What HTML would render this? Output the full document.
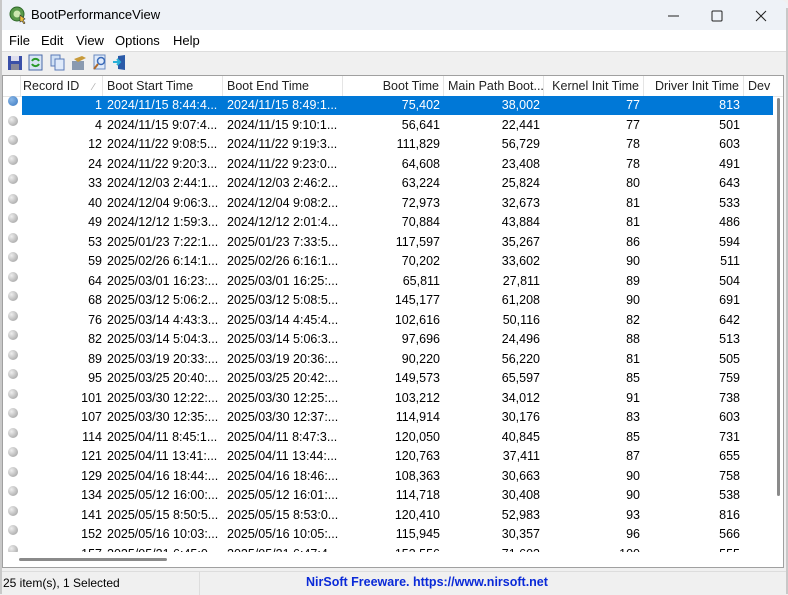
<!DOCTYPE html>
<html><head><meta charset="utf-8">
<style>
*{margin:0;padding:0;box-sizing:border-box}
body{width:788px;height:594px;overflow:hidden;background:#f0f0f0;font-family:"Liberation Sans",sans-serif;font-size:12.5px;color:#000;position:relative}
.title{position:absolute;left:0;top:0;width:788px;height:30px;background:#eef2f7;border-top-right-radius:8px}
.title .t{position:absolute;left:31px;top:7px;font-size:13px}
.menu{position:absolute;left:0;top:30px;width:788px;height:21px;background:#fff}
.menu span{position:absolute;top:3px;font-size:13px}
.tb{position:absolute;left:0;top:51px;width:788px;height:23px;background:#f0f0f0;border-top:1px solid #ddd}
.list{position:absolute;left:2px;top:75px;width:782px;height:493px;background:#fff;border:1px solid #a0a0a0;overflow:hidden}
.hdr{position:absolute;top:0;height:21px;left:0;width:800px;border-bottom:1px solid #e5e5e5}
.hdr div{position:absolute;top:0;height:21px;line-height:21px;border-right:1px solid #e5e5e5;padding:0 4px;white-space:nowrap;overflow:hidden;color:#222}
.row{position:absolute;left:0;width:770px;height:19px;line-height:19px}
.row div{position:absolute;top:0;white-space:nowrap;overflow:hidden}
.row .r{text-align:right}
.dot{position:absolute;left:5px;top:4px;width:10px;height:10px;border-radius:50%;background:radial-gradient(circle at 35% 35%,#eee,#999)}
.sel .bg{position:absolute;left:19px;top:0;width:751px;height:19px;background:#0078d7}
.sel{color:#fff}
.sel .dot{background:radial-gradient(circle at 35% 35%,#8ab8e8,#3a78c0)}
.vs{position:absolute;left:774px;top:22px;width:3px;height:398px;background:#8a8a8a;border-radius:2px}
.hs{position:absolute;left:16px;top:482px;width:148px;height:3px;background:#8a8a8a;border-radius:2px}
.status{position:absolute;left:0;top:571px;width:788px;height:23px;background:#f0f0f0;border-top:1px solid #ddd}
</style></head><body>
<div class="title">
<svg style="position:absolute;left:9px;top:6px" width="18" height="18"><circle cx="8" cy="8" r="7" fill="#5a9a4a" stroke="#2f6a2a"/><circle cx="8" cy="8" r="3.5" fill="#cde8b0"/><path d="M11 9 l5 4 -2 1 2 3 -1 1 -2 -3 -2 1z" fill="#f2c23a" stroke="#333" stroke-width=".6"/></svg>
<span class="t">BootPerformanceView</span>
<svg style="position:absolute;left:660px;top:9px" width="120" height="14"><line x1="8" y1="7" x2="19" y2="7" stroke="#222"/><rect x="52" y="2" width="10" height="10" fill="none" stroke="#222" rx="1"/><path d="M96 2 l10 10 M106 2 l-10 10" stroke="#222"/></svg>
</div>
<div class="menu"><span style="left:9px">File</span><span style="left:41px">Edit</span><span style="left:76px">View</span><span style="left:115px">Options</span><span style="left:173px">Help</span></div>
<div class="tb">
<svg width="140" height="22" style="position:absolute;left:0;top:0">
<rect x="8" y="4" width="14" height="14" fill="#3a4fa8"/><rect x="11" y="4" width="8" height="5" fill="#dde"/><rect x="11" y="12" width="8" height="6" fill="#889"/>
<rect x="29" y="3" width="13" height="15" fill="#d8e4f4" stroke="#4a6aa8"/><path d="M32 9 a4 4 0 0 1 7 0 M39 12 a4 4 0 0 1 -7 0" stroke="#2a9a2a" stroke-width="2" fill="none"/>
<rect x="51" y="3" width="9" height="11" fill="#cfe0f5" stroke="#5a7ab8"/><rect x="55" y="7" width="9" height="11" fill="#dfeafa" stroke="#5a7ab8"/>
<rect x="72" y="9" width="12" height="9" fill="#8a9ab0"/><path d="M74 7 l8 -3 4 2 -8 4z" fill="#c89a3a"/>
<rect x="94" y="3" width="11" height="14" fill="#dfeafa" stroke="#6a8ac0"/><circle cx="101" cy="9" r="3.5" fill="none" stroke="#3a6ab8" stroke-width="1.5"/><line x1="98" y1="12" x2="94" y2="17" stroke="#b06a2a" stroke-width="2"/>
<path d="M118 4 l7 -1 0 15 -7 -1z" fill="#2a5aa8"/><path d="M113 10 h7 M117 7 l3 3 -3 3" stroke="#2ab0d8" stroke-width="2" fill="none"/>
</svg>
</div>
<div class="list">
<div class="hdr">
<div style="left:0;width:18px"></div>
<div style="left:18px;width:82px;padding-left:2px">Record ID <span style="color:#aaa;font-size:10px;margin-left:10px">∕</span></div>
<div style="left:100px;width:120px">Boot Start Time</div>
<div style="left:220px;width:120px">Boot End Time</div>
<div style="left:340px;width:101px;text-align:right">Boot Time</div>
<div style="left:441px;width:100px;text-align:right">Main Path Boot...</div>
<div style="left:541px;width:100px;text-align:right">Kernel Init Time</div>
<div style="left:641px;width:100px;text-align:right">Driver Init Time</div>
<div style="left:741px;width:60px">Dev</div>
</div>
<div id="rows"></div>
<div class="vs"></div>
<div class="hs"></div>
</div>
<div class="status">
<span style="position:absolute;left:3px;top:4px;font-size:12px">25 item(s), 1 Selected</span>
<div style="position:absolute;left:199px;top:0;width:1px;height:23px;background:#ddd"></div>
<span style="position:absolute;left:306px;top:3px;font-size:12.5px;font-weight:bold;color:#0a2ad8">NirSoft Freeware. https://www.nirsoft.net</span>
</div>
<div style="position:absolute;left:0;top:0;width:2px;height:594px;background:#c8c8c8"></div>
<div style="position:absolute;right:0;top:8px;width:2px;height:586px;background:#c8c8c8"></div>
<script>
var d=[[1,"2024/11/15 8:44:4...","2024/11/15 8:49:1...","75,402","38,002",77,813],
[4,"2024/11/15 9:07:4...","2024/11/15 9:10:1...","56,641","22,441",77,501],
[12,"2024/11/22 9:08:5...","2024/11/22 9:19:3...","111,829","56,729",78,603],
[24,"2024/11/22 9:20:3...","2024/11/22 9:23:0...","64,608","23,408",78,491],
[33,"2024/12/03 2:44:1...","2024/12/03 2:46:2...","63,224","25,824",80,643],
[40,"2024/12/04 9:06:3...","2024/12/04 9:08:2...","72,973","32,673",81,533],
[49,"2024/12/12 1:59:3...","2024/12/12 2:01:4...","70,884","43,884",81,486],
[53,"2025/01/23 7:22:1...","2025/01/23 7:33:5...","117,597","35,267",86,594],
[59,"2025/02/26 6:14:1...","2025/02/26 6:16:1...","70,202","33,602",90,511],
[64,"2025/03/01 16:23:...","2025/03/01 16:25:...","65,811","27,811",89,504],
[68,"2025/03/12 5:06:2...","2025/03/12 5:08:5...","145,177","61,208",90,691],
[76,"2025/03/14 4:43:3...","2025/03/14 4:45:4...","102,616","50,116",82,642],
[82,"2025/03/14 5:04:3...","2025/03/14 5:06:3...","97,696","24,496",88,513],
[89,"2025/03/19 20:33:...","2025/03/19 20:36:...","90,220","56,220",81,505],
[95,"2025/03/25 20:40:...","2025/03/25 20:42:...","149,573","65,597",85,759],
[101,"2025/03/30 12:22:...","2025/03/30 12:25:...","103,212","34,012",91,738],
[107,"2025/03/30 12:35:...","2025/03/30 12:37:...","114,914","30,176",83,603],
[114,"2025/04/11 8:45:1...","2025/04/11 8:47:3...","120,050","40,845",85,731],
[121,"2025/04/11 13:41:...","2025/04/11 13:44:...","120,763","37,411",87,655],
[129,"2025/04/16 18:44:...","2025/04/16 18:46:...","108,363","30,663",90,758],
[134,"2025/05/12 16:00:...","2025/05/12 16:01:...","114,718","30,408",90,538],
[141,"2025/05/15 8:50:5...","2025/05/15 8:53:0...","120,410","52,983",93,816],
[152,"2025/05/16 10:03:...","2025/05/16 10:05:...","115,945","30,357",96,566],
[157,"2025/05/21 6:45:0...","2025/05/21 6:47:4...","153,556","71,603",100,555]];
var h="";
for(var i=0;i<d.length;i++){var r=d[i];var y=20+i*19.5;
h+='<div class="row'+(i==0?' sel':'')+'" style="top:'+y+'px">'+(i==0?'<div class="bg"></div>':'')+'<div class="dot"></div>'+
'<div class="r" style="left:20px;width:79px">'+r[0]+'</div>'+
'<div style="left:104px;width:116px">'+r[1]+'</div>'+
'<div style="left:224px;width:116px">'+r[2]+'</div>'+
'<div class="r" style="left:340px;width:97px">'+r[3]+'</div>'+
'<div class="r" style="left:441px;width:96px">'+r[4]+'</div>'+
'<div class="r" style="left:541px;width:96px">'+r[5]+'</div>'+
'<div class="r" style="left:641px;width:96px">'+r[6]+'</div></div>';}
h+='<div style="position:absolute;left:0;top:476px;width:775px;height:20px;background:#fff"></div>';
document.getElementById("rows").innerHTML=h;
</script>
</body></html>
